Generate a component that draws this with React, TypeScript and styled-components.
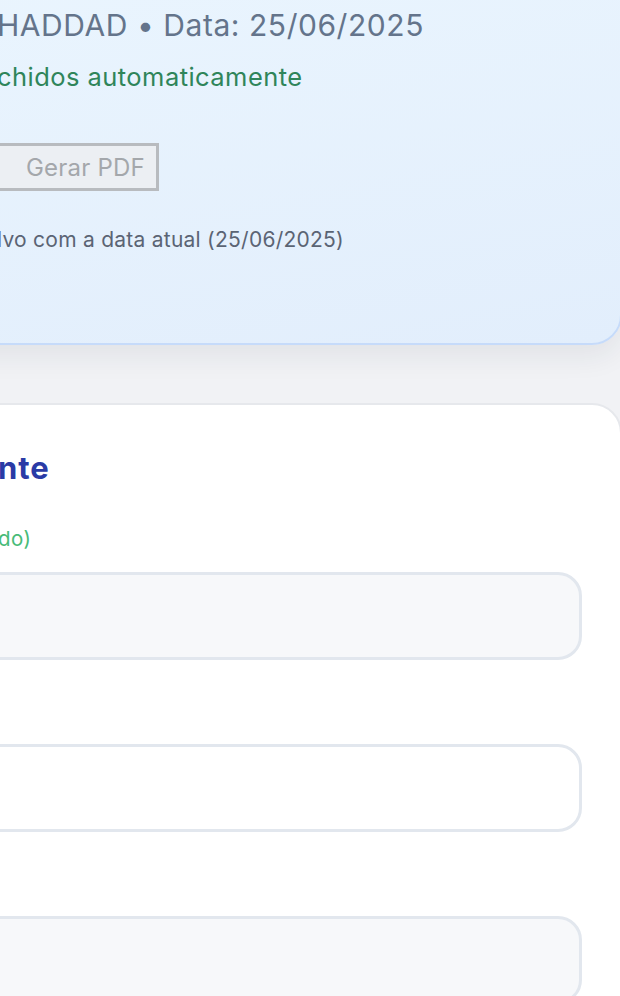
import React from "react";
import styled, { createGlobalStyle } from "styled-components";

const Global = createGlobalStyle`
  html, body { margin: 0; padding: 0; }
  body {
    background: #f1f2f5;
    overflow: hidden;
    font-family: Inter, "Noto Sans", "Liberation Sans", sans-serif;
    width: 620px;
    height: 996px;
  }
`;

const Page = styled.main`
  display: flex;
  flex-direction: column;
  gap: 58px;
  width: 682px;
  margin-left: -60px;
`;

const InfoCard = styled.section`
  margin-top: -40px;
  padding: 43px 40px 89px 55px;
  background: linear-gradient(170deg, #eaf5fe 0%, #e2eefc 100%);
  border: 2px solid #c6dbfa;
  border-radius: 30px;
  box-shadow: 0 12px 28px rgba(30, 41, 59, 0.07);
  display: flex;
  flex-direction: column;
  align-items: flex-start;
`;

const Meta = styled.p`
  margin: 0;
  font-size: 30px;
  line-height: 40px;
  letter-spacing: 0.55px;
  color: #64748b;
  white-space: nowrap;
`;

const AutoNote = styled.p`
  margin: 15px 0 0;
  font-size: 25.5px;
  line-height: 34px;
  letter-spacing: 0.45px;
  color: #2f855a;
  white-space: nowrap;
`;

const Actions = styled.div`
  margin: 49px 0 0 -40px;
  display: flex;
`;

const PdfButton = styled.button`
  height: 48px;
  box-sizing: border-box;
  padding: 0 11px 0 66px;
  font-family: inherit;
  font-size: 24px;
  letter-spacing: 0.2px;
  color: #a4a7ab;
  background: #eceff3;
  border: 3px solid #b8bbbf;
  border-radius: 0;
`;

const Hint = styled.p`
  margin: 35px 0 0;
  font-size: 21px;
  line-height: 28px;
  letter-spacing: 0.25px;
  color: #5b6474;
  white-space: nowrap;
`;

const FormCard = styled.section`
  padding: 44px 38px 0 56px;
  background: #ffffff;
  border: 2px solid #e6e8ec;
  border-radius: 30px;
  display: flex;
  flex-direction: column;
  height: 700px;
`;

const Title = styled.h2`
  margin: 0;
  font-size: 31px;
  line-height: 38px;
  letter-spacing: 0.9px;
  font-weight: 700;
  color: #2a3ba6;
  white-space: nowrap;
`;

const Status = styled.p`
  margin: 37px 0 0;
  font-size: 20.5px;
  line-height: 30px;
  letter-spacing: 0.4px;
  color: #48bb78;
  white-space: nowrap;
`;

const Fields = styled.div`
  margin: 18px 0 0 -40px;
  display: flex;
  flex-direction: column;
  gap: 84px;
`;

const Field = styled.div<{ $readOnly?: boolean }>`
  height: 88px;
  box-sizing: border-box;
  border: 3px solid #e2e7ee;
  border-radius: 24px;
  background: ${(p) => (p.$readOnly ? "#f7f8fa" : "#ffffff")};
`;

export default function App() {
  return (
    <>
      <Global />
      <Page>
        <InfoCard>
          <Meta>HADDAD • Data: 25/06/2025</Meta>
          <AutoNote>chidos automaticamente</AutoNote>
          <Actions>
            <PdfButton disabled>Gerar PDF</PdfButton>
          </Actions>
          <Hint>lvo com a data atual (25/06/2025)</Hint>
        </InfoCard>
        <FormCard>
          <Title>nte</Title>
          <Status>do)</Status>
          <Fields>
            <Field $readOnly />
            <Field />
            <Field $readOnly />
          </Fields>
        </FormCard>
      </Page>
    </>
  );
}
